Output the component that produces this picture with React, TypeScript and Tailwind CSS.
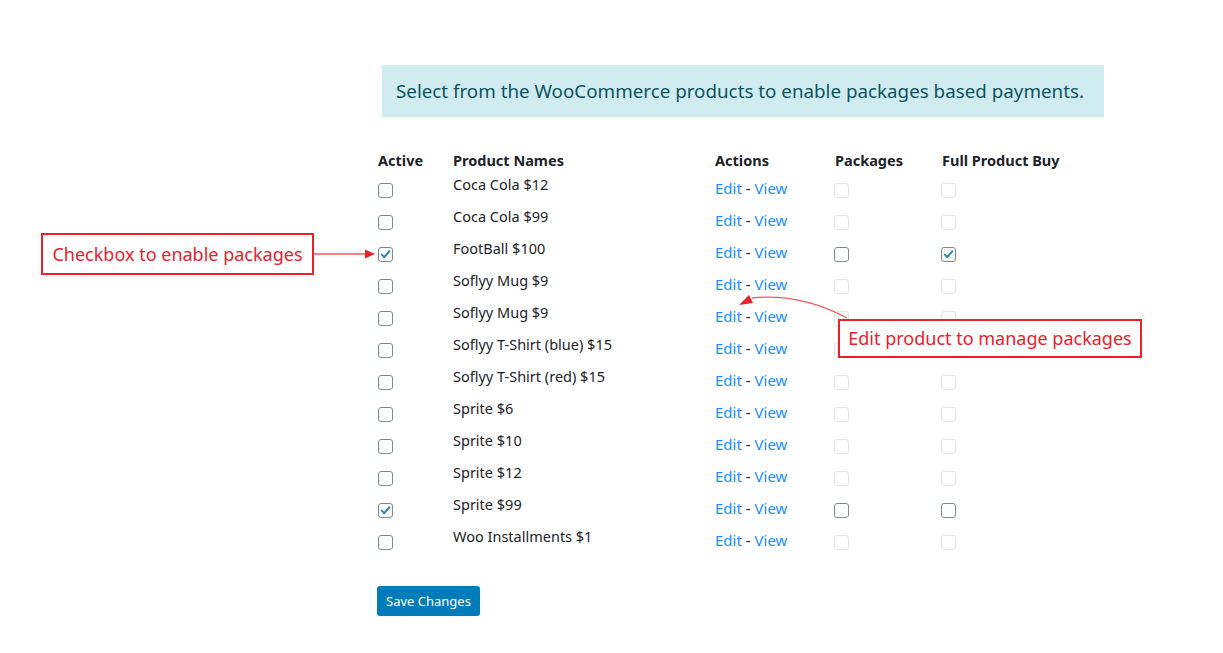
import React from 'react';

type Row = {
  name: string;
  active: boolean;
  enabled: boolean;
  packages: boolean;
  full: boolean;
};

// product rows, in the order shown
const rows: Row[] = [
  { name: 'Coca Cola $12', active: false, enabled: false, packages: false, full: false },
  { name: 'Coca Cola $99', active: false, enabled: false, packages: false, full: false },
  { name: 'FootBall $100', active: true, enabled: true, packages: false, full: true },
  { name: 'Soflyy Mug $9', active: false, enabled: false, packages: false, full: false },
  { name: 'Soflyy Mug $9', active: false, enabled: false, packages: false, full: false },
  { name: 'Soflyy T-Shirt (blue) $15', active: false, enabled: false, packages: false, full: false },
  { name: 'Soflyy T-Shirt (red) $15', active: false, enabled: false, packages: false, full: false },
  { name: 'Sprite $6', active: false, enabled: false, packages: false, full: false },
  { name: 'Sprite $10', active: false, enabled: false, packages: false, full: false },
  { name: 'Sprite $12', active: false, enabled: false, packages: false, full: false },
  { name: 'Sprite $99', active: true, enabled: true, packages: false, full: false },
  { name: 'Woo Installments $1', active: false, enabled: false, packages: false, full: false },
];

const Box = ({ checked = false, disabled = false }: { checked?: boolean; disabled?: boolean }) => (
  <span
    className={`inline-flex h-[15px] w-[15px] items-center justify-center rounded-[3px] border bg-white ${
      disabled ? 'border-[#e4e4e4]' : 'border-[#7e8993]'
    }`}
  >
    {checked && (
      <svg width="11" height="11" viewBox="0 0 11 11">
        <path d="M1.8 5.6 L4.3 8.2 L9.4 2.2" fill="none" stroke="#2e86c1" strokeWidth="2" strokeLinecap="round" strokeLinejoin="round" />
      </svg>
    )}
  </span>
);

const cols = 'grid grid-cols-[76px_262px_121px_107px_160px]';

export default function App() {
  return (
    <div className="relative h-[653px] w-[1223px] overflow-hidden bg-white font-['Noto_Sans','Open_Sans',sans-serif] text-[#1d2327]">
      <div className="pl-[377px] pt-[65px]">
        {/* notice */}
        <div className="ml-[5px] flex h-[52px] w-[722px] items-center bg-[#d1ecf1] pl-[14px] text-[18.8px] text-[#0c5460]">
          Select from the WooCommerce products to enable packages based payments.
        </div>

        {/* products table */}
        <div className="mt-[31px]">
          <div className={`${cols} h-[26px] items-center text-[14.5px] font-bold`}>
            <div className="pl-[1px]">Active</div>
            <div>Product Names</div>
            <div>Actions</div>
            <div className="-ml-[1px]">Packages</div>
            <div className="-ml-[1px]">Full Product Buy</div>
          </div>
          {rows.map((r, i) => (
            <div key={i} className={`${cols} h-[32px] items-center text-[14.5px]`}>
              <div className="flex pl-[1px]">
                <Box checked={r.active} />
              </div>
              <div className="-mt-[10px]">{r.name}</div>
              <div className="-mt-[4px] text-[15px] text-[#1e8cff]">
                Edit <span className="text-[#1d2327]">-</span> View
              </div>
              <div className="-ml-[2px] flex">
                <Box checked={r.packages} disabled={!r.enabled} />
              </div>
              <div className="-ml-[2px] flex">
                <Box checked={r.full} disabled={!r.enabled} />
              </div>
            </div>
          ))}
        </div>

        <button className="mt-[28px] h-[30px] rounded-[3px] bg-[#007cba] px-[9px] pt-[1px] text-[13px] text-white">
          Save Changes
        </button>
      </div>

      {/* annotations */}
      <div className="absolute left-[41px] top-[233px] flex h-[42px] w-[273px] items-center justify-center border-2 border-[#e8212b] bg-white text-[18px] text-[#e8212b]">
        Checkbox to enable packages
      </div>
      <div className="absolute left-[838px] top-[319px] flex h-[39px] w-[304px] items-center justify-center border-2 border-[#e8212b] bg-white text-[18px] text-[#e8212b]">
        Edit product to manage packages
      </div>
      <svg className="pointer-events-none absolute left-0 top-0" width="1223" height="653">
        <line x1="314" y1="254" x2="366" y2="254" stroke="#ef5a5f" strokeWidth="1.3" />
        <polygon points="375,254 365,249.5 365,258.5" fill="#e8212b" />
        <path d="M847 318 Q 800 293 752 298" fill="none" stroke="#ef5a5f" strokeWidth="1.3" />
        <polygon points="739,305 749,295 753,303" fill="#e8212b" />
      </svg>
    </div>
  );
}
